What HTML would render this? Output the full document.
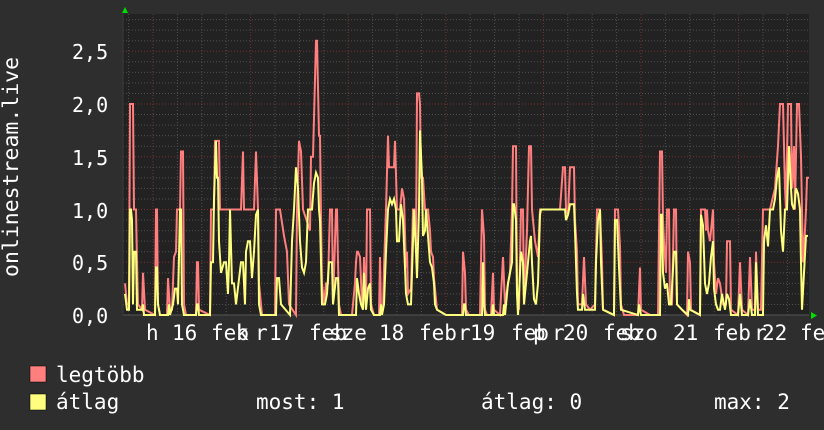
<!DOCTYPE html>
<html><head><meta charset="utf-8"><style>
html,body{margin:0;padding:0;background:#2e2e2e;width:824px;height:430px;overflow:hidden}
.t{position:absolute;font-family:"DejaVu Sans Mono","Liberation Mono",monospace;font-size:21px;color:#fff;white-space:pre;line-height:1}
.y{font-size:20px}
</style></head><body>
<svg id="g" width="824" height="430" style="position:absolute;left:0;top:0" xmlns="http://www.w3.org/2000/svg">
<rect x="123" y="14" width="686" height="301" fill="#222222"/>
<g id="grid"></g>
<g id="data"></g>
<polygon points="122,13 128,13 125,7" fill="#00e000"/>
<polygon points="811,312 811,319 817,315.5" fill="#00e000"/>
<rect x="30" y="366" width="16" height="16" fill="#ff7f7f" stroke="#000" stroke-width="0.5"/>
<rect x="30" y="394" width="16" height="16" fill="#ffff7f" stroke="#000" stroke-width="0.5"/>
</svg>
<div class="t y" style="left:72px;top:42px">2,5</div>
<div class="t y" style="left:72px;top:95px">2,0</div>
<div class="t y" style="left:72px;top:148px">1,5</div>
<div class="t y" style="left:72px;top:201px">1,0</div>
<div class="t y" style="left:72px;top:253px">0,5</div>
<div class="t y" style="left:72px;top:306px">0,0</div>
<div class="t" style="left:1px;top:277px;transform-origin:0 0;transform:rotate(-90deg);font-size:21.5px">onlinestream.live</div>
<div class="t" style="left:146px;top:323px">h</div>
<div class="t" style="left:172px;top:323px">16</div>
<div class="t" style="left:211px;top:323px">feb</div>
<div class="t" style="left:236px;top:323px">k</div>
<div class="t" style="left:255px;top:323px">r</div>
<div class="t" style="left:269px;top:323px">17</div>
<div class="t" style="left:309px;top:323px">feb</div>
<div class="t" style="left:329px;top:323px">sze</div>
<div class="t" style="left:379px;top:323px">18</div>
<div class="t" style="left:419px;top:323px">feb</div>
<div class="t" style="left:458px;top:323px">r</div>
<div class="t" style="left:470px;top:323px">19</div>
<div class="t" style="left:511px;top:323px">feb</div>
<div class="t" style="left:533px;top:323px">p</div>
<div class="t" style="left:552px;top:323px">r</div>
<div class="t" style="left:563px;top:323px">20</div>
<div class="t" style="left:603px;top:323px">feb</div>
<div class="t" style="left:620px;top:323px">szo</div>
<div class="t" style="left:673px;top:323px">21</div>
<div class="t" style="left:713px;top:323px">feb</div>
<div class="t" style="left:754px;top:323px">r</div>
<div class="t" style="left:762px;top:323px">22</div>
<div class="t" style="left:800px;top:323px">feb</div>
<div class="t" style="left:56px;top:365px">legtöbb</div>
<div class="t" style="left:56px;top:392px">átlag</div>
<div class="t" style="left:256px;top:392px">most: 1</div>
<div class="t" style="left:481px;top:392px">átlag: 0</div>
<div class="t" style="left:714px;top:392px">max: 2</div>
<script>
function Y(v){return 315-v*105.5;}
var grid=document.getElementById('grid'),s='';
for(var i=1;i<=28;i++){var y=315-i*10.55;if(y<14)break;var maj=(i%5==0);
s+='<line x1="123" x2="809" y1="'+y+'" y2="'+y+'" stroke="'+(maj?'#7a3030':'#505050')+'" stroke-width="1" stroke-dasharray="1,2"/>';}
for(var x=128.6;x<809;x+=24.4){var k=Math.round((x-153)/24.4);var maj=(k%4==0);
s+='<line y1="14" y2="315" x1="'+x+'" x2="'+x+'" stroke="'+(maj?'#7a3030':'#505050')+'" stroke-width="1" stroke-dasharray="1,2"/>';}
s+='<line x1="123" x2="809" y1="315" y2="315" stroke="#555" stroke-width="1"/>';
s+='<line x1="123" x2="123" y1="14" y2="315" stroke="#3a3a3a" stroke-width="1"/>';
grid.innerHTML=s;
var R=[[125,0.3],[127,0.1],[129,0.1],[130,2.0],[133,2.0],[134,1.0],[136,1.0],[137,0.5],[138,0.1],[142,0.05],[143,0.4],[145,0.05],[155,0],[156,1.0],[157,1.0],[158,0.1],[160,0],[167,0],[168,0.35],[170,0.05],[172,0.05],[174,0.55],[176,0.6],[177,1.0],[180,1.0],[181,1.55],[183,1.55],[184,0.1],[186,0],[196,0],[197,0.5],[198,0.5],[199,0.05],[210,0],[211,1.0],[214,1.0],[215,1.65],[217,1.65],[219,1.65],[220,1.0],[230,1.0],[241,1.0],[243,1.55],[244,1.0],[254,1.0],[256,1.55],[258,1.0],[259,0.3],[262,0],[275,0],[276,1.0],[280,1.0],[284,0.75],[287,0.6],[289,0.1],[296,0],[297,1.0],[299,1.65],[301,1.55],[303,1.0],[310,0.8],[311,1.5],[313,1.5],[316,2.6],[317,2.6],[319,1.7],[320,1.7],[321,0.95],[322,0.3],[324,0.1],[326,0.3],[328,0.3],[330,1.0],[332,1.0],[333,0.1],[336,1.0],[337,1.0],[338,0.5],[339,0.1],[341,0],[352,0],[355,0.3],[356,0.5],[357,0.6],[358,0.6],[360,0.55],[362,0.1],[363,0.1],[364,0.55],[366,0.05],[367,1.0],[370,1.0],[371,0.1],[374,0],[379,0],[380,0.55],[381,0.05],[383,0.05],[384,0.45],[386,1.0],[388,1.7],[389,1.4],[390,1.4],[392,1.4],[394,1.4],[395,1.65],[397,1.0],[400,1.0],[402,1.2],[404,1.1],[406,0.45],[407,0.6],[408,0.2],[411,0.25],[413,1.0],[415,1.0],[416,0.65],[417,2.1],[419,2.1],[420,2.0],[421,1.3],[423,1.3],[425,1.0],[428,1.0],[430,0.8],[431,0.6],[433,0.55],[434,0.35],[436,0.15],[437,0.05],[446,0],[462,0],[463,0.6],[465,0.4],[466,0.05],[469,0],[480,0],[482,1.0],[484,0.75],[485,0.05],[487,0],[491,0],[493,0.4],[494,0.05],[500,0],[503,0.55],[505,0.1],[508,0.3],[510,0.4],[512,1.0],[513,1.6],[514,1.6],[516,1.6],[517,0.2],[519,0.05],[521,1.0],[523,1.0],[524,0.1],[527,0.8],[529,1.6],[531,1.6],[532,1.0],[535,0.7],[538,0.55],[540,1.0],[560,1.0],[563,1.4],[565,1.4],[566,1.0],[568,0.95],[570,1.4],[574,1.4],[575,0.9],[577,0.6],[578,0.1],[582,0.1],[584,0.55],[586,0.1],[590,0.05],[595,0.1],[597,1.0],[600,1.0],[602,0.5],[603,0.05],[614,0],[615,1.0],[618,1.0],[620,0.65],[621,0.1],[624,0],[638,0],[640,0.45],[641,0.05],[650,0],[658,0],[660,1.55],[662,1.55],[663,0.9],[664,0.7],[666,0.4],[667,1.0],[669,1.0],[670,0.1],[672,0.1],[674,1.0],[676,1.0],[677,0.1],[682,0.05],[687,0],[688,0.6],[690,0.5],[691,0.05],[700,0],[701,1.0],[705,1.0],[706,0.8],[707,1.0],[708,0.8],[710,0.7],[713,1.0],[714,0.5],[716,0.2],[718,0.35],[720,0.3],[723,0.1],[726,0.1],[727,0.7],[730,0.7],[731,0.05],[738,0],[740,0.5],[742,0.05],[748,0],[750,0.55],[752,0.05],[755,0.05],[756,0.6],[758,0.05],[761,0.05],[763,1.0],[766,1.0],[768,1.0],[770,1.0],[775,1.2],[778,1.6],[780,2.0],[783,2.0],[785,1.2],[786,1.0],[788,2.0],[791,2.0],[792,1.2],[794,1.6],[795,1.0],[797,2.0],[799,2.0],[801,1.5],[803,0.5],[805,0.8],[806,1.0],[807,1.3],[809,1.3]];
var A=[[125,0.2],[127,0.05],[129,0.05],[130,1.0],[131,1.0],[132,0.9],[133,0.1],[134,0.6],[136,0.6],[137,0.05],[142,0.05],[143,0.1],[144,0],[155,0],[156,0.45],[157,0.45],[158,0.1],[160,0],[168,0],[169,0.1],[170,0],[173,0.1],[175,0.25],[177,0.25],[178,0.1],[180,1.0],[181,1.0],[182,0.1],[184,0],[196,0],[197,0.1],[198,0.1],[199,0],[210,0],[211,0.5],[213,0.5],[214,1.1],[216,1.65],[217,1.3],[218,1.3],[219,0.7],[221,0.4],[224,0.5],[226,0.5],[228,0.2],[229,0.5],[230,1.0],[232,0.3],[234,0.3],[236,0.1],[241,0.5],[243,0.5],[245,0.1],[246,0.6],[248,0.7],[250,0.7],[252,0.35],[254,0.6],[256,0.95],[258,1.0],[259,0.1],[261,0],[276,0],[277,0.35],[279,0.35],[281,0.1],[290,0],[292,0.7],[294,1.0],[296,1.4],[298,1.2],[300,0.7],[302,0.45],[304,0.4],[306,0.5],[308,1.0],[310,1.0],[312,1.0],[314,1.25],[316,1.35],[318,1.3],[319,1.0],[320,0.9],[321,0.5],[322,0.1],[325,0.1],[327,0.2],[329,0.5],[332,0.5],[333,0.1],[336,0.35],[338,0.35],[339,0],[356,0],[357,0.35],[359,0.2],[361,0.1],[363,0.05],[364,0.4],[366,0.05],[368,0.25],[370,0.3],[371,0.05],[374,0],[380,0],[381,0.1],[382,0],[384,0.1],[386,0.6],[388,1.0],[390,1.1],[392,1.05],[394,1.1],[396,1.0],[397,0.7],[399,0.7],[401,1.05],[403,0.9],[405,0.45],[406,0.2],[408,0.1],[411,0.1],[414,1.0],[416,0.6],[417,0.35],[419,1.0],[420,1.75],[422,1.3],[423,0.75],[425,0.8],[426,1.0],[428,0.75],[430,0.5],[432,0.45],[434,0.3],[435,0.1],[437,0.05],[446,0],[463,0],[464,0.1],[465,0.1],[466,0],[482,0],[483,0.5],[484,0.1],[485,0],[492,0],[493,0.1],[494,0],[503,0],[504,0.1],[505,0],[508,0.3],[510,0.4],[512,0.5],[513,1.05],[514,1.05],[516,0.9],[517,0.2],[518,0],[521,0.6],[523,0.5],[524,0.1],[527,0.4],[530,0.7],[531,0.75],[532,0.5],[534,0.15],[536,0.1],[538,0.3],[540,0.95],[541,1.0],[560,1.0],[563,1.0],[565,1.0],[566,0.9],[568,0.95],[570,1.05],[574,1.05],[575,0.8],[577,0.2],[578,0.05],[582,0.05],[583,0.2],[585,0.05],[595,0.05],[596,0.5],[598,0.9],[600,1.0],[601,0.5],[603,0.05],[614,0],[615,0.9],[617,0.9],[619,0.45],[621,0.05],[638,0],[639,0.1],[641,0],[660,0],[661,0.95],[662,0.95],[663,0.4],[665,0.25],[667,0.3],[669,0.1],[671,0.1],[674,0.6],[676,0.6],[677,0.1],[682,0.05],[688,0],[689,0.15],[690,0.05],[700,0],[701,0.95],[703,0.85],[705,0.3],[707,0.2],[709,0.3],[711,0.55],[713,0.7],[714,0.25],[716,0.1],[718,0.05],[720,0.05],[722,0.2],[725,0.05],[727,0.2],[729,0.15],[731,0],[738,0],[740,0.2],[742,0],[748,0],[750,0.15],[752,0],[755,0],[756,0.5],[758,0],[763,0],[764,0.7],[766,0.85],[768,0.65],[770,1.0],[773,1.0],[775,1.1],[777,1.3],[779,1.4],[781,0.8],[783,0.6],[785,1.0],[787,1.0],[789,1.6],[791,1.2],[792,1.05],[794,1.0],[796,1.2],[798,1.15],[800,1.0],[801,0.5],[802,0.05],[804,0.4],[806,0.75],[808,0.75]];
function pl(a,c){return '<polyline fill="none" stroke="'+c+'" stroke-width="2" stroke-linejoin="miter" points="'+a.map(function(p){return p[0]+','+Y(p[1]).toFixed(1)}).join(' ')+'"/>';}
document.getElementById('data').innerHTML=pl(R,'#ff7f7f')+pl(A,'#ffff7f');
</script>
</body></html>
